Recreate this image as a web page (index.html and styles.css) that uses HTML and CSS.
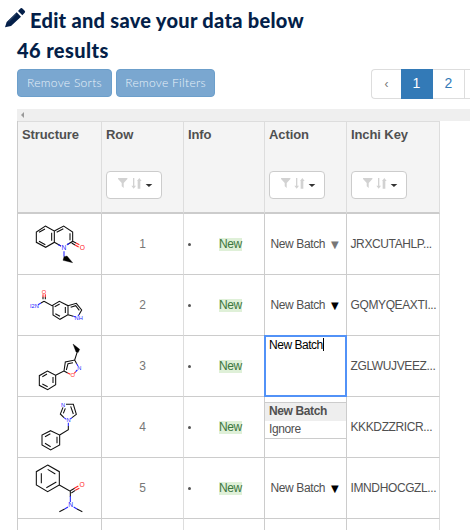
FILE: index.html
```
<!DOCTYPE html>
<html lang="en">
<head>
<meta charset="utf-8">
<title>Edit and save your data</title>
<link rel="stylesheet" href="styles.css">
</head>
<body>
<header class="heading">
  <svg class="pencil" viewBox="0 0 60 60"><path d="M0 58L5 42 35 13 48 26 18 54ZM39 9L47 1Q50-1 53 2L59 8Q62 11 59 14L52 22Z"/><path class="shine" d="M11 41L34 18"/></svg>
  <h1 class="title">Edit and save your data below</h1>
</header>
<h2 class="results">46 results</h2>
<div class="toolbar">
  <button class="btn sorts"><span>Remove Sorts</span></button>
  <button class="btn filters"><span>Remove Filters</span></button>
  <nav class="pages"><a class="prev">‹</a><a class="active">1</a><a>2</a></nav>
</div>
<div class="scrollbar"><i></i></div>
<svg class="defs"><defs>
  <g id="tools"><path class="pale" d="M0 0H28V3L17 15V30L11 25V15L0 3ZM45 0H49V23H54L47 32 40 23H45ZM63 32H59V9H57L64 0 71 9H67V32Z"/><path class="caret" d="M83 18H103L93 27Z"/></g>
</defs></svg>
<main class="table">
  <div class="row head">
    <div class="cell">Structure</div>
    <div class="cell">Row<button class="tool"><svg viewBox="0 0 104 34"><use href="#tools"/></svg></button></div>
    <div class="cell">Info</div>
    <div class="cell">Action<button class="tool"><svg viewBox="0 0 104 34"><use href="#tools"/></svg></button></div>
    <div class="cell">Inchi Key<button class="tool"><svg viewBox="0 0 104 34"><use href="#tools"/></svg></button></div>
  </div>
  <div class="row">
    <div class="cell"><svg class="mol" viewBox="24 12 249 180">
      <path d="M106 48L133 63V97L107 112 79 97V66ZM133 63L161 48 188 66V94L171 104M133 97L153 108M105 57L87 67M87 94L106 104M125 92V68M140 67L160 56M180 70V91M188 94L198 99M185 99L195 105"/>
      <path class="n" d="M153 108L145 104M171 104L178 100M162 124V140"/><path class="o" d="M198 99L208 104M195 105L206 111"/>
      <path class="wedge" d="M162 140L171 138 188 158 159 151Z"/>
      <text class="n" x="162" y="120">N</text><text class="o" x="217" y="121">O</text></svg></div>
    <div class="cell num">1</div><div class="cell info"><b></b><span>New</span></div>
    <div class="cell action">New Batch<i class="grey">▼</i></div><div class="cell key">JRXCUTAHLP...</div>
  </div>
  <div class="row">
    <div class="cell"><svg class="mol" viewBox="24 195 249 180">
      <path d="M102 274L126 287 148 274 174 287V314L150 328 129 315V287M174 287L199 280 215 300 207 314M174 314L190 319M134 290L149 282M136 311L150 319M166 309V291M182 292L197 287 208 301M99 268V260M106 268V260M102 274L93 279"/>
      <path class="n" d="M93 279L84 284M190 319L197 321M207 314L204 318"/><path class="o" d="M99 262V253M106 262V253"/>
      <text class="n small" x="73" y="294">I2N</text><text class="o small" x="102" y="251">O</text><text class="n small" x="206" y="329">NH</text></svg></div>
    <div class="cell num">2</div><div class="cell info"><b></b><span>New</span></div>
    <div class="cell action">New Batch<i>▼</i></div><div class="cell key">GQMYQEAXTI...</div>
  </div>
  <div class="row">
    <div class="cell"><svg class="mol" viewBox="24 18 249 180">
      <path d="M112 123L137 136V164L113 179 88 166V137ZM137 136L162 123 166 96 194 90 200 101M162 123L173 129M111 132L97 140M97 162L113 170M129 159V141M169 120L174 101 189 98M194 90L202 65"/>
      <path class="o" d="M173 129L181 133M193 130L197 125"/><path class="n" d="M200 101L204 108M202 120L197 125"/>
      <path class="wedge" d="M189 42L209 58 205 67 198 66Z"/>
      <text class="o small" x="188" y="141">O</text><text class="n small" x="208" y="120">N</text></svg></div>
    <div class="cell num">3</div><div class="cell info"><b></b><span>New</span></div>
    <div class="cell editing"><div class="editor">New Batch<i></i></div><div class="menu"><div class="selected">New Batch</div><div>Ignore</div></div></div><div class="cell key">ZGLWUJVEEZ...</div>
  </div>
  <div class="row">
    <div class="cell"><svg class="mol" viewBox="24 201 249 180">
      <path d="M122 302L149 315V345L122 360 96 345V315ZM149 315L175 299V288M168 223L190 223 199 253 186 263M159 232L151 252 162 263M121 311L105 320M105 340L122 350M141 340V320M182 229L190 252M166 235L160 250"/>
      <path class="n" d="M175 288V278M162 263L169 268M186 263L181 267"/>
      <text class="n small" x="159" y="230">N</text><text class="n small" x="176" y="276">N</text></svg></div>
    <div class="cell num">4</div><div class="cell info"><b></b><span>New</span></div>
    <div class="cell"></div><div class="cell key">KKKDZZRICR...</div>
  </div>
  <div class="row">
    <div class="cell"><svg class="mol" viewBox="24 54 249 180">
      <path d="M113 75L148 95V135L113 155 79 135V95ZM148 135L181 154V170M94 100V130M109 143L139 126M136 102L113 88M181 152L194 145M184 159L196 151M148 215L164 207M217 215L201 207"/>
      <path class="n" d="M181 168V186M164 207L174 201M201 207L191 201"/><path class="o" d="M193 145L205 138M196 151L208 145"/>
      <text class="n" x="182" y="202">N</text><text class="o" x="216" y="142">O</text></svg></div>
    <div class="cell num">5</div><div class="cell info"><b></b><span>New</span></div>
    <div class="cell action">New Batch<i>▼</i></div><div class="cell key">IMNDHOCGZL...</div>
  </div>
  <div class="row last"><div class="cell"></div><div class="cell"></div><div class="cell"></div><div class="cell"></div><div class="cell"></div></div>
</main>
</body>
</html>
```
FILE: styles.css
```
* { box-sizing: border-box; }
html { overflow: hidden; }
body { margin: 0; width: 470px; height: 530px; overflow: hidden; background: #fff; color: #505050; font: 12px "Liberation Sans", sans-serif; }
h1, h2 { margin: 0; color: #041f49; font: 900 20px/30px Lato, sans-serif; white-space: nowrap; }
.heading { display: flex; height: 35px; padding: 5px 0 0 5px; }
.pencil { width: 20px; height: 20px; margin: 3px 5px 0 0; fill: #041f49; overflow: visible; }
.shine { stroke: #49617f; stroke-width: 2; }
.title { letter-spacing: .28px; }
.results { padding-left: 17px; letter-spacing: .4px; }
.toolbar { display: flex; height: 44px; padding: 4px 0 0 17px; }
.btn { flex: none; height: 28px; margin: 0 4px 0 0; padding: 0 0 2px; border: 1px solid #6c9fcb; border-radius: 4px; background: #7aa7d0; color: #e8f1f9; font: 300 12px Lato, sans-serif; letter-spacing: .3px; white-space: nowrap; }
.sorts { width: 95px; }
.filters { width: 99px; }
.pages { display: flex; flex: 1; height: 30px; margin-left: 152px; border: 1px solid #ddd; border-right: 0; border-radius: 4px 0 0 4px; }
.pages a { flex: none; width: 32px; border-right: 1px solid #ddd; color: #337ab7; font-size: 14px; line-height: 27px; text-align: center; }
.pages .prev { width: 29px; border: 0; color: #777; font-size: 12px; line-height: 28px; }
.pages .active { margin: -1px 0; padding-top: 1px; border-color: #337ab7; background: #337ab7; color: #fff; }
.scrollbar { height: 12px; margin-left: 17px; padding: 3px 0 0 4px; background: #efefef; }
.scrollbar i { display: block; width: 0; border: 3px solid transparent; border-left: 0; border-right-color: #999; }
.defs { display: block; width: 0; height: 0; }
.table { width: 423px; margin-left: 17px; border-left: 1px solid #ccc; }
.row { display: grid; grid-template-columns: 84px 82px 81px 82px 93px; height: 61px; }
.last { height: 11px; }
.last .cell { border-bottom: 0; }
.cell { position: relative; border-right: 1px solid #ccc; border-bottom: 1px solid #ccc; white-space: nowrap; letter-spacing: -.38px; }
.cell:nth-child(2), .cell:nth-child(5) { border-right-color: #ddd; }
.head { height: 93px; }
.head .cell { padding: 5px 0 0 4px; border-color: #ddd; border-top: 1px solid #ddd; border-bottom: 2px solid #ccc; background: #f4f4f4; font: bold 13px/15px "Liberation Sans", sans-serif; letter-spacing: -.1px; }
.tool { display: block; width: 56px; height: 28px; margin-top: 29px; padding: 0 0 0 11px; border: 1px solid #ccc; border-radius: 4px; background: #fff; }
.tool svg { display: block; width: 34.7px; height: 11.3px; margin-top: -2px; }
.pale { fill: #d2d2d2; }
.caret { fill: #333; }
.mol { display: block; width: 83px; height: 60px; fill: none; stroke: #111; stroke-width: 3.2; letter-spacing: 0; }
.mol path.n { stroke: #22f; }
.mol path.o { stroke: #f22; }
.mol .wedge { fill: #000; stroke: #000; stroke-width: 1; }
.mol text { font: 20px "Liberation Sans", sans-serif; text-anchor: middle; stroke: none; }
.mol text.small { font-size: 17px; }
.mol text.n { fill: #22f; }
.mol text.o { fill: #f22; }
.num { color: #777; line-height: 60px; text-align: center; }
.info { display: flex; align-items: center; padding-left: 4px; }
.info b { width: 3px; height: 3px; margin: 1px 28px 0 0; border-radius: 50%; background: #555; }
.info span { height: 13px; background: #dff0d8; color: #3c763d; line-height: 13px; }
.action, .key { line-height: 60px; padding-left: 5.5px; }
.key { padding-left: 3.5px; }
.action i { margin-left: 6px; color: #000; font: 10px "DejaVu Sans", sans-serif; }
.action .grey { color: #777; }
.editor { position: absolute; left: -1px; top: -1px; z-index: 2; width: 83px; height: 62px; padding: 1px 3px; border: 2px solid #5292f7; background: #fff; color: #000; line-height: 14px; letter-spacing: -.48px; }
.editor i { display: inline-block; width: 1px; height: 13px; background: #000; vertical-align: -2px; }
.menu { position: absolute; left: 0; top: 66px; z-index: 1; width: 82px; height: 37px; border: solid #ccc; border-width: 1px 1px 1px 0; background: #fff; line-height: 17.5px; }
.menu div { padding-left: 4px; }
.menu .selected { background: #eee; font-weight: bold; }
```
